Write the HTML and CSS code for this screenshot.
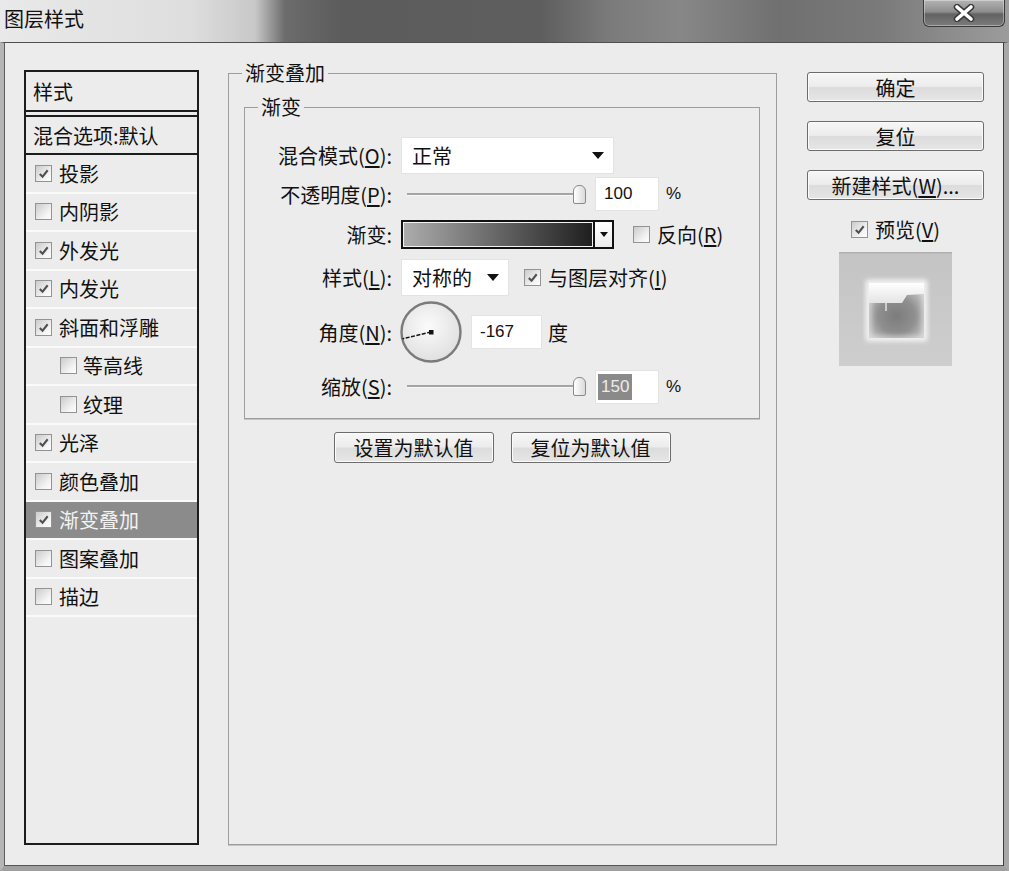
FILE: index.html
```html
<!DOCTYPE html>
<html lang="zh-CN">
<head>
<meta charset="utf-8">
<title>图层样式</title>
<link rel="stylesheet" href="styles.css">
</head>
<body>
<div class="win">
  <div class="titlebar">
    <span class="title">图层样式</span>
    <button class="close" aria-label="关闭">
      <svg width="24" height="18" viewBox="-12 -9 24 18"><path d="M-7 -6 L7 6 M7 -6 L-7 6" stroke="#3a3a3a" stroke-width="6.5" stroke-linecap="round"/><path d="M-7 -6 L7 6 M7 -6 L-7 6" stroke="#ffffff" stroke-width="3.6" stroke-linecap="round"/></svg>
    </button>
  </div>
  <div class="client">
    <div class="stylelist">
      <div class="li head">样式</div>
      <div class="li blend">混合选项:默认</div>
      <div class="li"><span class="cb"><svg viewBox="0 0 14 14"><path d="M3 7.5 L6 10.5 L11.5 3.5"/></svg></span>投影</div>
      <div class="li"><span class="cb"></span>内阴影</div>
      <div class="li"><span class="cb"><svg viewBox="0 0 14 14"><path d="M3 7.5 L6 10.5 L11.5 3.5"/></svg></span>外发光</div>
      <div class="li"><span class="cb"><svg viewBox="0 0 14 14"><path d="M3 7.5 L6 10.5 L11.5 3.5"/></svg></span>内发光</div>
      <div class="li"><span class="cb"><svg viewBox="0 0 14 14"><path d="M3 7.5 L6 10.5 L11.5 3.5"/></svg></span>斜面和浮雕</div>
      <div class="li sub"><span class="cb"></span>等高线</div>
      <div class="li sub"><span class="cb"></span>纹理</div>
      <div class="li"><span class="cb"><svg viewBox="0 0 14 14"><path d="M3 7.5 L6 10.5 L11.5 3.5"/></svg></span>光泽</div>
      <div class="li"><span class="cb"></span>颜色叠加</div>
      <div class="li selected"><span class="cb"><svg viewBox="0 0 14 14"><path d="M3 7.5 L6 10.5 L11.5 3.5"/></svg></span>渐变叠加</div>
      <div class="li"><span class="cb"></span>图案叠加</div>
      <div class="li"><span class="cb"></span>描边</div>
    </div>

    <fieldset class="grp main">
      <legend>渐变叠加</legend>
      <fieldset class="grp inner">
        <legend>渐变</legend>
        <div class="row r-mode">
          <span class="lbl">混合模式(<u>O</u>):</span>
          <div class="select sel-mode"><span>正常</span><i class="arrow"></i></div>
        </div>
        <div class="row r-opacity">
          <span class="lbl">不透明度(<u>P</u>):</span>
          <div class="slider"><span class="track"></span><span class="thumb"></span></div>
          <div class="num">100</div>
          <span class="pct">%</span>
        </div>
        <div class="row r-grad">
          <span class="lbl">渐变:</span>
          <div class="grad"><span class="fill"></span><span class="dd"><i class="arrow small"></i></span></div>
          <span class="cb gap-grad"></span>
          <span class="cbtext">反向(<u>R</u>)</span>
        </div>
        <div class="row r-style">
          <span class="lbl">样式(<u>L</u>):</span>
          <div class="select sel-style"><span>对称的</span><i class="arrow"></i></div>
          <span class="cb gap-style"><svg viewBox="0 0 14 14"><path d="M3 7.5 L6 10.5 L11.5 3.5"/></svg></span>
          <span class="cbtext">与图层对齐(<u>I</u>)</span>
        </div>
        <div class="row r-angle">
          <span class="lbl">角度(<u>N</u>):</span>
          <svg class="dial" width="62" height="62" viewBox="0 0 62 62">
            <defs>
              <radialGradient id="dialg" cx="45%" cy="40%" r="60%">
                <stop offset="0" stop-color="#fbfbfb"/>
                <stop offset="1" stop-color="#e0e0e0"/>
              </radialGradient>
            </defs>
            <circle cx="31" cy="31" r="29.5" fill="url(#dialg)" stroke="#7b7b7b" stroke-width="2.4"/>
            <line x1="31" y1="31" x2="2.5" y2="37.8" stroke="#111" stroke-width="1.4" stroke-dasharray="4 1.5"/>
            <rect x="29" y="29" width="4.5" height="4.5" fill="#111"/>
          </svg>
          <div class="num angle">-167</div>
          <span class="deg">度</span>
        </div>
        <div class="row r-scale">
          <span class="lbl">缩放(<u>S</u>):</span>
          <div class="slider"><span class="track"></span><span class="thumb"></span></div>
          <div class="num selnum"><span class="hl">150</span></div>
          <span class="pct">%</span>
        </div>
      </fieldset>
      <div class="defbtns">
        <button class="btn def">设置为默认值</button>
        <button class="btn def">复位为默认值</button>
      </div>
    </fieldset>

    <div class="side">
      <button class="btn sidebtn first">确定</button>
      <button class="btn sidebtn">复位</button>
      <button class="btn sidebtn">新建样式(<u>W</u>)...</button>
      <div class="prevchk"><span class="cb"><svg viewBox="0 0 14 14"><path d="M3 7.5 L6 10.5 L11.5 3.5"/></svg></span><span class="cbtext">预览(<u>V</u>)</span></div>
      <div class="preview">
        <svg width="113" height="114" viewBox="0 0 113 114">
          <defs>
            <linearGradient id="pbg" x1="0" y1="0" x2="0" y2="1">
              <stop offset="0" stop-color="#c4c4c4"/>
              <stop offset="1" stop-color="#cecece"/>
            </linearGradient>
            <radialGradient id="sq" cx="50%" cy="60%" r="60%">
              <stop offset="0" stop-color="#7c7c7c"/>
              <stop offset="0.55" stop-color="#8f8f8f"/>
              <stop offset="1" stop-color="#c4c4c4"/>
            </radialGradient>
            <linearGradient id="top" x1="0" y1="0" x2="0" y2="1">
              <stop offset="0" stop-color="#ffffff"/>
              <stop offset="1" stop-color="#e4e4e4"/>
            </linearGradient>
            <filter id="blur" x="-30%" y="-30%" width="160%" height="160%"><feGaussianBlur stdDeviation="2.5"/></filter>
          </defs>
          <rect width="113" height="114" fill="url(#pbg)"/>
          <rect x="0" y="0" width="113" height="1.5" fill="#b0b0b0"/>
          <rect x="27" y="28" width="61" height="61" fill="#f4f4f4" filter="url(#blur)"/>
          <rect x="30" y="31" width="55" height="55" fill="url(#sq)"/>
          <rect x="30" y="31" width="55" height="55" fill="none" stroke="#ebebeb" stroke-width="2.5" filter="url(#blur)"/>
          <polygon points="30,31 85,31 85,42 68,43 63,51 30,51" fill="url(#top)"/>
          <line x1="47" y1="51" x2="47" y2="59" stroke="#e2e2e2" stroke-width="1.5"/>
        </svg>
      </div>
    </div>
  </div>
</div>
</body>
</html>
```

FILE: styles.css
```css
html, body {
  margin: 0;
  padding: 0;
}

body {
  width: 1009px;
  height: 871px;
  overflow: hidden;
  font-family: "Noto Sans CJK SC", "Liberation Sans", sans-serif;
  font-size: 20px;
  color: #111;
  background: #ececec;
}

u {
  text-decoration: underline;
  text-underline-offset: 2px;
}

.win {
  width: 1009px;
  height: 871px;
  display: flex;
  flex-direction: column;
}

/* ---------- title bar ---------- */
.titlebar {
  flex: none;
  height: 42px;
  display: flex;
  align-items: flex-start;
  justify-content: space-between;
  background: linear-gradient(90deg,
    #e9e9e9 0px, #dedede 190px, #c8c8c8 255px, #6c6c6c 285px,
    #5c5c5c 340px, #5e5e5e 540px, #7b7b7b 610px, #878787 680px,
    #707070 780px, #7a7a7a 880px, #9c9c9c 1009px);
}

.title {
  padding-left: 4px;
  line-height: 38px;
  color: #111;
}

.close {
  margin-right: 4px;
  width: 82px;
  height: 27px;
  padding: 0;
  border: 1px solid #3a3a3a;
  border-top: none;
  border-radius: 0 0 6px 6px;
  background: linear-gradient(#b3b3b3, #8e8e8e 45%, #626262 55%, #7c7c7c);
  box-shadow: inset 0 0 0 1px rgba(255, 255, 255, 0.35);
  display: flex;
  align-items: center;
  justify-content: center;
}

/* ---------- client area ---------- */
.client {
  flex: 1;
  box-sizing: border-box;
  display: flex;
  align-items: stretch;
  background: #ececec;
  border-top: 1px solid #4f4f4f;
  border-left: 4px solid #b5b5b5;
  border-right: 5px solid #a8a8a8;
  border-bottom: 5px solid #a0a0a0;
  box-shadow: inset 1px 0 0 #5e5e5e, inset -1px 0 0 #3e3e3e, inset 0 -1px 0 #555;
  padding: 27px 20px 21px 20px;
}

/* ---------- style list ---------- */
.stylelist {
  flex: none;
  width: 175px;
  box-sizing: border-box;
  border: 2px solid #1c1c1c;
}

.li {
  height: 38.5px;
  box-sizing: border-box;
  display: flex;
  align-items: center;
  padding-left: 9px;
  border-bottom: 2px solid #fafafa;
  white-space: nowrap;
}

.li .cb {
  margin-right: 7px;
}

.li.head {
  height: 40px;
  padding-left: 7px;
  border-bottom: 2px solid #1c1c1c;
}

.li.blend {
  height: 40px;
  margin-top: 3px;
  padding-left: 7px;
  border-top: 2px solid #1c1c1c;
  border-bottom: 2px solid #1c1c1c;
}

.li.sub {
  padding-left: 34px;
}

.li.sub .cb {
  margin-right: 6px;
}

.li.selected {
  background: #8b8b8b;
  color: #f2f2f2;
}

/* ---------- checkbox ---------- */
.cb {
  flex: none;
  display: inline-flex;
  align-items: center;
  justify-content: center;
  width: 17px;
  height: 17px;
  box-sizing: border-box;
  border: 1px solid #939393;
  background: linear-gradient(135deg, #cbcbcb, #f4f4f4 70%, #fdfdfd);
}

.cb svg {
  width: 13px;
  height: 13px;
}

.cb svg path {
  fill: none;
  stroke: #505050;
  stroke-width: 2.2;
}

.cbtext {
  margin-left: 7px;
  white-space: nowrap;
}

/* ---------- group boxes ---------- */
.grp {
  margin: 0;
  border: 1px solid #9d9d9d;
  box-shadow: 0 1px 0 #c4c4c4;
  min-width: 0;
}

.grp legend {
  font-size: 20px;
  line-height: 22px;
  padding: 0 3px;
}

.main {
  flex: none;
  width: 549px;
  box-sizing: border-box;
  margin-left: 29px;
  margin-top: -8px;
  padding: 0 16px 0 15px;
}

.main > legend {
  margin-left: -2px;
}

.inner {
  margin-top: 12px;
  padding: 18px 0 10px 0;
}

.inner > legend {
  margin-left: 13px;
}

/* ---------- rows ---------- */
.row {
  display: flex;
  align-items: center;
  white-space: nowrap;
}

.r-mode { height: 39px; }
.r-opacity { height: 38px; }
.r-grad { height: 43px; }
.r-style { height: 43px; }
.r-angle { height: 66px; }
.r-scale { height: 43px; }

.lbl {
  flex: none;
  width: 147px;
  margin-right: 9px;
  text-align: right;
}

.select {
  box-sizing: border-box;
  height: 37px;
  background: #fff;
  border: 1px solid #e3e3e3;
  display: flex;
  align-items: center;
  justify-content: space-between;
  padding: 0 9px 0 10px;
}

.sel-mode { width: 213px; }
.sel-style { width: 108px; }

.arrow {
  display: block;
  width: 0;
  height: 0;
  border-left: 6px solid transparent;
  border-right: 6px solid transparent;
  border-top: 7px solid #111;
}

.arrow.small {
  border-left-width: 4px;
  border-right-width: 4px;
  border-top-width: 5px;
}

.slider {
  flex: none;
  width: 185px;
  height: 20px;
  display: flex;
  align-items: center;
}

.track {
  flex: 1;
  height: 2px;
  margin-left: 6px;
  background: #a4a4a4;
  border-bottom: 1px solid #f8f8f8;
}

.thumb {
  flex: none;
  width: 11px;
  height: 17px;
  margin-left: -2px;
  border: 1px solid #8a8a8a;
  border-radius: 6px 6px 2px 2px;
  background: linear-gradient(90deg, #ffffff, #dadada);
}

.num {
  flex: none;
  box-sizing: border-box;
  width: 64px;
  height: 34px;
  margin-left: 9px;
  padding-left: 8px;
  background: #fff;
  border: 1px solid #e3e3e3;
  display: flex;
  align-items: center;
  font-family: "Liberation Sans", "DejaVu Sans", sans-serif;
  font-size: 17px;
}

.num.selnum {
  padding-left: 2px;
}

.hl {
  background: #8a8a8a;
  color: #ececec;
  padding: 3px 3px;
}

.num.angle {
  width: 71px;
  margin-left: 9px;
}

.pct {
  margin-left: 7px;
  font-family: "Liberation Sans", "DejaVu Sans", sans-serif;
  font-size: 17px;
}

.deg {
  margin-left: 6px;
}

.dial {
  flex: none;
  display: block;
  margin-left: -1px;
}

.grad {
  flex: none;
  box-sizing: border-box;
  width: 213px;
  height: 29px;
  border: 2px solid #111;
  background: #fff;
  display: flex;
}

.grad .fill {
  flex: 1;
  background: linear-gradient(90deg, #adadad, #1e1e1e);
  border-right: 2px solid #111;
  box-shadow: inset 0 0 0 1px #f2f2f2;
}

.grad .dd {
  width: 17px;
  display: flex;
  align-items: center;
  justify-content: center;
  background: linear-gradient(#fff, #ececec);
}

.gap-grad { margin-left: 19px; }
.gap-style { margin-left: 15px; }

/* ---------- buttons ---------- */
.btn {
  box-sizing: border-box;
  padding: 0;
  font-family: "Noto Sans CJK SC", "Liberation Sans", sans-serif;
  font-size: 20px;
  color: #111;
  border: 1px solid #6c6c6c;
  border-radius: 3px;
  background: linear-gradient(#f7f7f7, #ececec 48%, #dcdcdc 52%, #e6e6e6);
  box-shadow: inset 0 0 0 1px #fbfbfb;
  white-space: nowrap;
}

.defbtns {
  display: flex;
  justify-content: center;
  gap: 17px;
  margin-top: 13px;
}

.btn.def {
  width: 160px;
  height: 31px;
}

.side {
  flex: none;
  width: 177px;
  margin-left: 30px;
  display: flex;
  flex-direction: column;
  align-items: center;
}

.sidebtn {
  width: 177px;
  height: 30px;
  margin-top: 19px;
}

.sidebtn.first {
  margin-top: 2px;
}

.prevchk {
  height: 28px;
  margin-top: 15px;
  display: flex;
  align-items: center;
}

.preview {
  margin-top: 9px;
  width: 113px;
  height: 114px;
}

.preview svg {
  display: block;
}
```
